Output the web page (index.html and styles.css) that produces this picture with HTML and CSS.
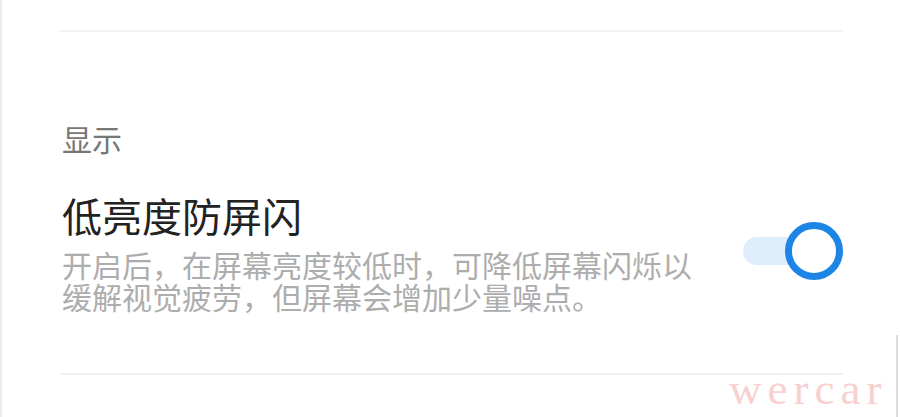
FILE: index.html
```html
<!DOCTYPE html>
<html>
	<head>
		<title>显示设置</title>
		<link rel="stylesheet" href="styles.css">
	</head>
	<body>
		<div class="page">
			<div class="list">
				<div class="divider"></div>
				<div class="section">显示</div>
				<div class="item">
					<div class="item-text">
						<div class="title">低亮度防屏闪</div>
						<div class="desc">开启后，在屏幕亮度较低时，可降低屏幕闪烁以</div>
						<div class="desc">缓解视觉疲劳，但屏幕会增加少量噪点。</div>
					</div>
					<div class="switch on">
						<span class="track"></span>
						<span class="knob"></span>
					</div>
				</div>
				<div class="divider bottom"></div>
			</div>
			<div class="edge"></div>
			<div class="watermark">wercar</div>
		</div>
	</body>
</html>
```

FILE: styles.css
```css
body {
margin: 0;
background-color: white;
font-family: "Noto Sans CJK SC", "Noto Sans", sans-serif;
}

.page {
position: relative;
height: 417px;
overflow: hidden;
border-left: 2px solid #ebebeb;
}

.list {
padding: 0 57px 0 58px;
}

.divider {
height: 2px;
margin-top: 30px;
background-color: #f1f1f1;
}

.divider.bottom {
margin-top: 61px;
}

.section {
margin-top: 88px;
font-size: 30px;
line-height: 36px;
color: #777777;
padding-left: 2px;
}

.item {
display: flex;
align-items: center;
justify-content: space-between;
margin-top: 35px;
padding-left: 2px;
}

.title {
font-size: 40px;
line-height: 48px;
color: #222222;
margin-bottom: 9px;
}

.desc {
font-size: 30px;
line-height: 32px;
height: 32px;
color: #adadad;
}

.switch {
position: relative;
width: 100px;
height: 58px;
margin-top: -2px;
}

.switch .track {
position: absolute;
left: 0;
top: 15px;
width: 80px;
height: 28px;
border-radius: 14px;
background-color: #deedfb;
}

.switch .knob {
position: absolute;
right: 0;
top: 0;
width: 44px;
height: 44px;
border: 7px solid #1c85e6;
border-radius: 50%;
background-color: #ffffff;
}

.edge {
position: absolute;
right: 2px;
top: 335px;
bottom: 0;
width: 2px;
background-color: #dddddd;
}

.watermark {
position: absolute;
left: 727px;
top: 363px;
font-family: "Liberation Serif", serif;
font-size: 45px;
letter-spacing: 6px;
color: #f8d0d0;
}
```
